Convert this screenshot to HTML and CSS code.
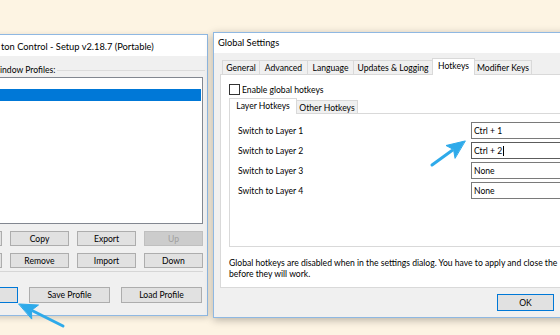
FILE: index.html
```html
<!DOCTYPE html>
<html>
<head>
<meta charset="utf-8">
<link rel="stylesheet" href="styles.css">
</head>
<body>
<div class="desktop">

  <div class="win left-win">
    <div class="titlebar lw-title"><span>ton Control - Setup v2.18.7 (Portable)</span></div>
    <div class="lw-body">
      <div class="group-head"><span class="group-label">indow Profiles:</span><div class="group-line"></div></div>
      <div class="listbox">
        <div class="list-row selected"></div>
      </div>
      <div class="btn-grid">
        <div class="btn"></div>
        <div class="btn">Copy</div>
        <div class="btn">Export</div>
        <div class="btn disabled">Up</div>
        <div class="btn"></div>
        <div class="btn">Remove</div>
        <div class="btn">Import</div>
        <div class="btn">Down</div>
      </div>
      <div class="sep"></div>
      <div class="btn-row">
        <div class="btn tall focused"></div>
        <div class="btn tall">Save Profile</div>
        <div class="btn tall">Load Profile</div>
      </div>
    </div>
  </div>

  <div class="win dialog">
    <div class="titlebar dlg-title"><span>Global Settings</span></div>
    <div class="dlg-body">
      <div class="tabs">
        <div class="tab t-general">General</div>
        <div class="tab t-adv">Advanced</div>
        <div class="tab t-lang">Language</div>
        <div class="tab t-upd">Updates &amp; Logging</div>
        <div class="tab t-hot active">Hotkeys</div>
        <div class="tab t-mod">Modifier Keys</div>
      </div>
      <div class="panel">
        <div class="check-row"><span class="checkbox"></span><span>Enable global hotkeys</span></div>
        <div class="tabs inner-tabs">
          <div class="tab t-layer active">Layer Hotkeys</div>
          <div class="tab t-other">Other Hotkeys</div>
        </div>
        <div class="inner-panel">
          <div class="hk-grid">
            <span class="hk-label">Switch to Layer 1</span><div class="input">Ctrl + 1</div>
            <span class="hk-label">Switch to Layer 2</span><div class="input focus">Ctrl + 2<span class="caret"></span></div>
            <span class="hk-label">Switch to Layer 3</span><div class="input">None</div>
            <span class="hk-label">Switch to Layer 4</span><div class="input">None</div>
          </div>
        </div>
        <p class="note">Global hotkeys are disabled when in the settings dialog. You have to apply and close the<br>before they will work.</p>
      </div>
      <div class="dlg-buttons">
        <div class="btn dbtn focused">OK</div>
      </div>
    </div>
  </div>

  <svg class="arrows" width="560" height="335" viewBox="0 0 560 335">
    <g fill="#2eaaea" stroke="#2eaaea" stroke-linecap="round" stroke-linejoin="round">
      <line x1="432" y1="165" x2="452" y2="150.5" stroke-width="3"/>
      <polygon points="465,141 446,145.5 453.5,149.5 455,158" stroke-width="1"/>
      <line x1="63" y1="326" x2="33" y2="311" stroke-width="3"/>
      <polygon points="19,304 38.5,305 31.5,310.3 31.7,318.7" stroke-width="1"/>
    </g>
  </svg>
</div>
</body>
</html>
```
FILE: styles.css
```css
* { box-sizing: border-box; }
html, body { margin: 0; padding: 0; }
body {
  width: 560px;
  height: 335px;
  overflow: hidden;
  background: #fdf4e3;
  font-family: Lato, "Noto Sans", sans-serif;
  font-size: 8.6px;
  color: #000;
}
.desktop {
  position: relative;
  width: 560px;
  height: 335px;
  overflow: hidden;
}

/* windows */
.win {
  position: absolute;
  border: 1px solid #8fb8e2;
  background: #f0f0f0;
  display: flex;
  flex-direction: column;
}
.titlebar {
  background: #fff;
  font-size: 9.3px;
  display: flex;
  align-items: center;
  white-space: nowrap;
}

/* left window */
.left-win {
  left: -100px;
  top: 34px;
  width: 308px;
  height: 282px;
  box-shadow: 0 2px 6px rgba(0,0,0,0.18);
}
.lw-title { height: 21px; padding-left: 100px; padding-top: 1px; }
.lw-body {
  flex: 1;
  display: flex;
  flex-direction: column;
  align-items: flex-end;
  padding-right: 4px;
}
.group-head {
  align-self: stretch;
  display: flex;
  align-items: center;
  height: 11px;
  margin-top: 8px;
  padding-left: 99px;
  margin-right: -2px;
}
.group-label { white-space: nowrap; padding-right: 2px; }
.group-line { flex: 1; height: 1px; background: #dcdcdc; margin-top: 1px; }
.listbox {
  width: 280px;
  height: 147px;
  margin-top: 2px;
  background: #fff;
  border: 1px solid #828790;
  padding: 11px 1px 0;
}
.list-row { height: 12px; }
.list-row.selected { background: #0078d7; }

.btn {
  background: #e1e1e1;
  border: 1px solid #adadad;
  display: flex;
  align-items: center;
  justify-content: center;
  white-space: nowrap;
  height: 15px;
}
.btn.disabled { background: #cccccc; border-color: #bfbfbf; color: #a0a0a0; }
.btn.focused { border-color: #0078d7; }
.btn.tall { height: 16px; width: 81px; }

.btn-grid {
  margin-top: 7px;
  display: grid;
  grid-template-columns: repeat(4, 59px);
  grid-auto-rows: 15px;
  column-gap: 8px;
  row-gap: 7px;
}
.sep {
  width: 300px;
  height: 1px;
  background: #d6d6d6;
  margin-top: 3px;
}
.btn-row {
  margin-top: 15px;
  margin-right: 1px;
  display: flex;
  gap: 11px;
}

/* dialog */
.dialog {
  left: 213px;
  top: 32px;
  width: 474px;
  height: 286px;
  box-shadow: 0 2px 8px rgba(0,0,0,0.28);
}
.dlg-title { height: 20px; padding-left: 4px; padding-bottom: 1px; }
.dlg-body {
  flex: 1;
  padding: 5px 6px 0 6px;
  display: flex;
  flex-direction: column;
}
.tabs {
  display: flex;
  align-items: flex-end;
  height: 16px;
  margin-left: 2px;
}
.tab {
  height: 14px;
  border: 1px solid #d9d9d9;
  border-bottom: none;
  background: #f0f0f0;
  margin-left: -1px;
  display: flex;
  align-items: center;
  justify-content: center;
  white-space: nowrap;
  padding-top: 1px;
}
.tab:first-child { margin-left: 0; }
.tab.active {
  height: 17px;
  margin-bottom: -1px;
  background: #fff;
  position: relative;
  z-index: 1;
  padding-top: 0;
  padding-bottom: 2px;
}
.t-general { width: 38px; }
.t-adv { width: 49px; }
.t-lang { width: 47px; }
.t-upd { width: 80px; }
.t-hot { width: 43px; }
.t-mod { width: 58px; }

.panel {
  width: 460px;
  height: 214px;
  background: #fff;
  border: 1px solid #d9d9d9;
  padding: 8px 0 0 8px;
  display: flex;
  flex-direction: column;
}
.check-row {
  display: flex;
  align-items: center;
  height: 13px;
  gap: 2px;
}
.checkbox {
  width: 11px;
  height: 11px;
  border: 1px solid #333;
  background: #fff;
}
.inner-tabs {
  margin-top: 2px;
  margin-left: 0;
  height: 15px;
}
.inner-tabs .tab { height: 13px; }
.inner-tabs .tab.active { height: 16px; padding-bottom: 1px; }
.t-layer { width: 68px; }
.t-other { width: 62px; }

.inner-panel {
  width: 442px;
  height: 134px;
  border: 1px solid #d9d9d9;
  background: #fff;
  padding: 8px 0 0 8px;
}
.hk-grid {
  display: grid;
  grid-template-columns: 233px 120px;
  grid-auto-rows: 17px;
  row-gap: 3px;
  align-items: center;
}
.hk-label { white-space: nowrap; }
.input {
  height: 17px;
  border: 1px solid #7a7a7a;
  background: #fff;
  padding-left: 2px;
  display: flex;
  align-items: center;
  white-space: nowrap;
}
.input.focus { border-color: #5c5c5c; }
.caret { width: 1px; height: 10px; background: #000; margin-left: 1px; }

.note {
  margin: 11px 0 0;
  line-height: 11px;
  white-space: nowrap;
}

.dlg-buttons {
  display: flex;
  margin-top: 6px;
  padding-left: 277px;
}
.dbtn { width: 57px; height: 17px; }

.arrows {
  position: absolute;
  left: 0;
  top: 0;
  pointer-events: none;
}
```
